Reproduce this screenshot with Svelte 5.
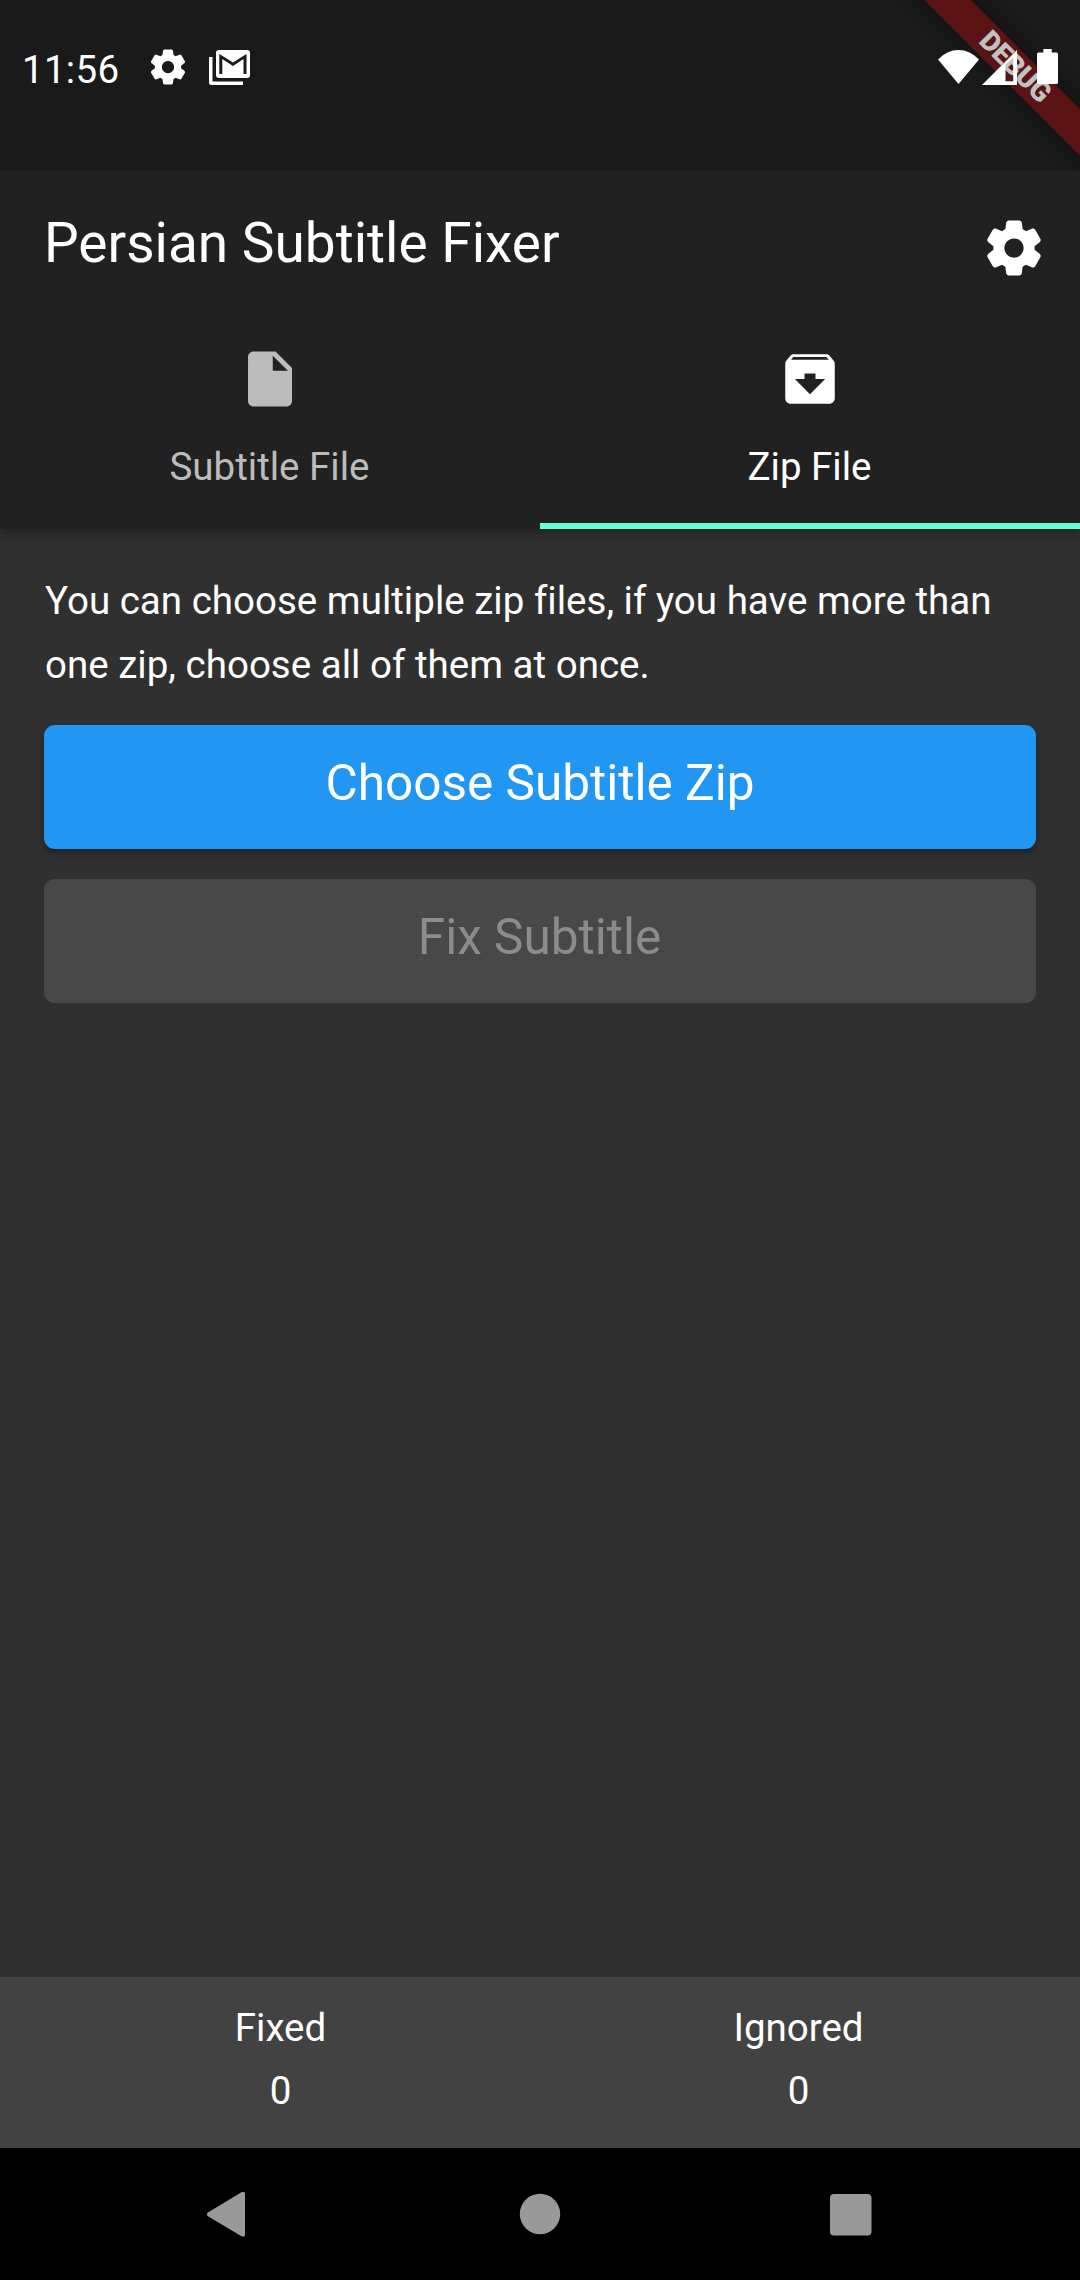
<script>
  const tabs = [
    { label: 'Subtitle File', icon: 'file', active: false },
    { label: 'Zip File', icon: 'archive', active: true }
  ];
  const counters = [
    { label: 'Fixed', value: 0 },
    { label: 'Ignored', value: 0 }
  ];
  const gear =
    'M19.5 12c0-.23-.01-.45-.03-.68l1.86-1.41c.4-.3.51-.86.26-1.3l-1.87-3.23c-.25-.44-.79-.62-1.25-.42l-2.15.91c-.37-.26-.76-.49-1.17-.68l-.29-2.31C14.8 2.38 14.37 2 13.87 2h-3.73c-.51 0-.94.38-1 .88l-.29 2.31c-.41.19-.8.42-1.17.68l-2.15-.91c-.46-.2-1-.02-1.25.42L2.41 8.62c-.25.44-.14.99.26 1.3l1.86 1.41C4.51 11.55 4.5 11.77 4.5 12s.01.45.03.68l-1.86 1.41c-.4.3-.51.86-.26 1.3l1.87 3.23c.25.44.79.62 1.25.42l2.15-.91c.37.26.76.49 1.17.68l.29 2.31c.06.5.49.88.99.88h3.73c.5 0 .93-.38.99-.88l.29-2.31c.41-.19.8-.42 1.17-.68l2.15.91c.46.2 1 .02 1.25-.42l1.87-3.23c.25-.44.14-.99-.26-1.3l-1.86-1.41C19.49 12.45 19.5 12.23 19.5 12zM12 15.5c-1.93 0-3.5-1.57-3.5-3.5s1.57-3.5 3.5-3.5 3.5 1.57 3.5 3.5S13.93 15.5 12 15.5z';
</script>

<div class="screen">
  <header class="status">
    <div class="banner"><span>DEBUG</span></div>
    <div class="status-left">
      <span class="clock">11:56</span>
      <svg class="s-gear" viewBox="0 0 24 24"><path d={gear} /></svg>
      <svg class="s-mail" viewBox="0 0 41 35">
        <path d="M0 7h3.500v24.500H34V35H2.500Q0 35 0 32.500Z" />
        <path fill-rule="evenodd" d="M10 0H38Q41 0 41 3V25Q41 28 38 28H10Q7 28 7 25V3Q7 0 10 0ZM10.300 4V24H13.300V9L24 16L34.500 9V24H37.500V4L24 12.500Z" />
      </svg>
    </div>
    <div class="status-right">
      <svg class="wifi" viewBox="0 0 41 34"><path d="M20.500 34L0 9.500Q9 0 20.500 0T41 9.500Z" /></svg>
      <svg class="signal" viewBox="0 0 35 35"><path fill-rule="evenodd" d="M0 35L35 0V35ZM23.500 15V31.300H31.200V7.800Z" /></svg>
      <svg class="battery" viewBox="0 0 21 35"><path d="M6.300 0H14.700V3.500H19.500Q21 3.500 21 5V33.500Q21 35 19.500 35H1.500Q0 35 0 33.500V5Q0 3.500 1.500 3.500H6.300Z" /></svg>
    </div>
  </header>

  <section class="appbar">
    <div class="toolbar">
      <h1>Persian Subtitle Fixer</h1>
      <svg class="icon" viewBox="0 0 24 24"><path d={gear} /></svg>
    </div>
    <nav class="tabs">
      {#each tabs as tab}
        <div class="tab" class:active={tab.active}>
          <svg class="icon" viewBox="0 0 24 24">
            {#if tab.icon === 'file'}
              <path d="M6 2c-1.100 0-1.990.9-1.990 2L4 20c0 1.100.890 2 1.990 2H18c1.100 0 2-.9 2-2V8l-6-6H6zm7 7V3.500L18.500 9H13z" />
            {:else}
              <path d="M20.540 5.230l-1.390-1.680C18.880 3.210 18.470 3 18 3H6c-.470 0-.880.210-1.160.550L3.460 5.230C3.170 5.570 3 6.020 3 6.500V19c0 1.100.9 2 2 2h14c1.100 0 2-.9 2-2V6.500c0-.480-.170-.930-.460-1.270zM12 17.500L6.500 12H10v-2h4v2h3.500L12 17.500zM5.120 5l.810-1h12l.940 1H5.120z" />
            {/if}
          </svg>
          <span>{tab.label}</span>
        </div>
      {/each}
    </nav>
  </section>

  <main>
    <p>You can choose multiple zip files, if you have more than one zip, choose all of them at once.</p>
    <button class="primary">Choose Subtitle Zip</button>
    <button class="disabled" disabled>Fix Subtitle</button>
  </main>

  <footer>
    {#each counters as c}
      <div class="counter"><span>{c.label}</span><span>{c.value}</span></div>
    {/each}
  </footer>

  <div class="sysnav">
    <svg viewBox="0 0 44 48"><path d="M.500 22.800L34.500 2.200Q38 .800 38 4V44.500Q38 47.500 34.500 46.300L.500 26Q-1 24.500 .500 22.800Z" /></svg>
    <svg viewBox="0 0 44 48"><circle cx="22" cy="24" r="20.200" /></svg>
    <svg viewBox="0 0 44 48"><rect x="1" y="4" width="41.500" height="41.500" rx="4" /></svg>
  </div>
</div>

<style>
  :global(body) {
    margin: 0;
    background: #303030;
  }
  .screen {
    width: 1080px;
    height: 2280px;
    display: flex;
    flex-direction: column;
    overflow: hidden;
    background: #303030;
    color: #fff;
    font-family: Roboto, 'Liberation Sans', sans-serif;
    font-size: 38.5px;
  }
  svg {
    display: block;
    flex: none;
    fill: currentColor;
    overflow: visible;
  }
  .status {
    position: relative;
    z-index: 2;
    flex: none;
    height: 171px;
    box-sizing: border-box;
    padding: 0 22px 0 22px;
    display: flex;
    justify-content: space-between;
    align-items: flex-start;
    overflow: hidden;
    background: #1a1a1a;
  }
  .banner {
    position: absolute;
    left: 814px;
    top: 49.500px;
    width: 400px;
    height: 33px;
    box-sizing: border-box;
    padding-left: 2px;
    transform: rotate(45deg);
    display: flex;
    align-items: center;
    justify-content: center;
    background: #5b1414;
    box-shadow: 0 0 16.500px rgba(0, 0, 0, 0.5);
    color: #c1c1c1;
    font-size: 28px;
    font-weight: 900;
    letter-spacing: -0.4px;
    line-height: 31px;
  }
  .banner span {
    padding-bottom: 2px;
  }
  .status-left,
  .status-right {
    position: relative;
    display: flex;
    align-items: flex-start;
  }
  .clock {
    width: 129px;
    padding-top: 47px;
    line-height: 46px;
    letter-spacing: 0.3px;
  }
  .s-gear {
    width: 42px;
    height: 42px;
    margin: 46px 20px 0 -4px;
  }
  .s-mail {
    width: 41px;
    height: 35px;
    margin-top: 50px;
  }
  .wifi {
    width: 41px;
    height: 34px;
    margin: 50px 3px 0 0;
  }
  .signal {
    width: 35px;
    height: 35px;
    margin: 50px 20px 0 0;
  }
  .battery {
    width: 21px;
    height: 35px;
    margin-top: 49px;
  }
  .appbar {
    position: relative;
    z-index: 1;
    flex: none;
    height: 358px;
    background: #212121;
    box-shadow: 0 4px 10px rgba(0, 0, 0, 0.32);
    display: flex;
    flex-direction: column;
  }
  .toolbar {
    height: 154px;
    box-sizing: border-box;
    padding: 0 33px 0 44px;
    display: flex;
    align-items: center;
    justify-content: space-between;
  }
  h1 {
    margin: 0 0 10px;
    font-size: 55px;
    font-weight: 400;
    line-height: 64px;
  }
  .icon {
    width: 66px;
    height: 66px;
  }
  .tabs {
    flex: 1;
    display: grid;
    grid-template-columns: 1fr 1fr;
  }
  .tab {
    box-sizing: border-box;
    padding-top: 21px;
    display: flex;
    flex-direction: column;
    align-items: center;
    gap: 32px;
    color: #bcbcbc;
    border-bottom: 6px solid transparent;
  }
  .tab span {
    line-height: 46px;
    padding-right: 1px;
  }
  .tab.active {
    color: #fff;
    border-bottom-color: #64ffda;
  }
  main {
    flex: 1;
    padding: 40px 44px 0;
    display: flex;
    flex-direction: column;
  }
  p {
    margin: 0 -1px 28px 1px;
    line-height: 64px;
    letter-spacing: 0.015px;
  }
  button {
    width: 100%;
    height: 124px;
    box-sizing: border-box;
    margin: 0 0 30px;
    padding: 0 0 8px;
    border: 0;
    border-radius: 11px;
    font: inherit;
    font-size: 49.500px;
    line-height: 58px;
  }
  .primary {
    background: #2196f3;
    color: #fff;
    box-shadow: 0 4px 6px rgba(0, 0, 0, 0.3);
  }
  .disabled {
    padding-right: 1px;
    background: #484848;
    color: #8b8b8b;
  }
  footer {
    flex: none;
    height: 171px;
    box-sizing: border-box;
    padding-top: 19px;
    display: flex;
    background: #424242;
  }
  .counter {
    width: 561px;
    display: flex;
    flex-direction: column;
    align-items: center;
    line-height: 63px;
  }
  .counter + .counter {
    width: 475px;
  }
  .sysnav {
    flex: none;
    height: 132px;
    box-sizing: border-box;
    padding: 0 207px;
    display: flex;
    align-items: center;
    justify-content: space-between;
    background: #000;
    color: #999;
  }
  .sysnav svg {
    width: 44px;
    height: 48px;
  }
</style>
